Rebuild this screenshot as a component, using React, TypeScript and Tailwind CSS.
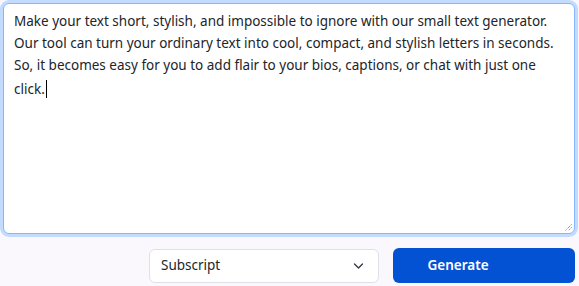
import { useState } from 'react';

const LINES = [
  'Make your text short, stylish, and impossible to ignore with our small text generator.',
  'Our tool can turn your ordinary text into cool, compact, and stylish letters in seconds.',
  'So, it becomes easy for you to add flair to your bios, captions, or chat with just one',
  'click.',
];

function ResizeGrip() {
  return (
    <svg className="absolute bottom-[2px] right-[2px]" width="8" height="8" viewBox="0 0 8 8">
      <path d="M7.5 1.5 1.5 7.5M7.5 4.5 4.5 7.5" stroke="#6b6b6b" strokeWidth="1" strokeDasharray="1 1" />
    </svg>
  );
}

export default function App() {
  const [style, setStyle] = useState('Subscript');

  return (
    <div
      className="h-[286px] w-[579px] bg-[#faf8fc] pl-[3px] pt-[3px]"
      style={{ fontFamily: '"Noto Sans", "Open Sans", sans-serif' }}
    >
      <div className="relative h-[231px] w-[572px] rounded-[6px] border border-[#86b7fe] bg-white px-[10px] py-[6px] text-[13.5px] leading-[22px] text-[#212529] shadow-[0_0_0_3px_#c3dbfe]">
        {LINES.map((line, i) => (
          <div key={i} className="whitespace-nowrap">
            {line}
            {i === LINES.length - 1 ? (
              <span className="ml-px inline-block h-[18px] w-px translate-y-[4px] bg-black" />
            ) : null}
          </div>
        ))}
        <ResizeGrip />
      </div>

      <div className="mt-[14px] flex items-center gap-[14px] pl-[146px]">
        <div className="relative flex h-[34px] w-[230px] items-center rounded-[6px] border border-[#dee2e6] bg-white pl-[11px] text-[13.5px] text-[#212529]">
          <span>{style}</span>
          <svg
            className="absolute right-[14px] top-1/2 -translate-y-1/2"
            width="11"
            height="8"
            viewBox="0 0 16 12"
            onClick={() => setStyle(style)}
          >
            <path d="m2 3 6 6 6-6" fill="none" stroke="#343a40" strokeWidth="2" strokeLinecap="round" strokeLinejoin="round" />
          </svg>
        </div>
        <button
          type="button"
          className="h-[35px] w-[182px] rounded-[6px] bg-[#0452d4] pr-[52px] text-[13.5px] font-semibold text-white"
        >
          Generate
        </button>
      </div>
    </div>
  );
}
